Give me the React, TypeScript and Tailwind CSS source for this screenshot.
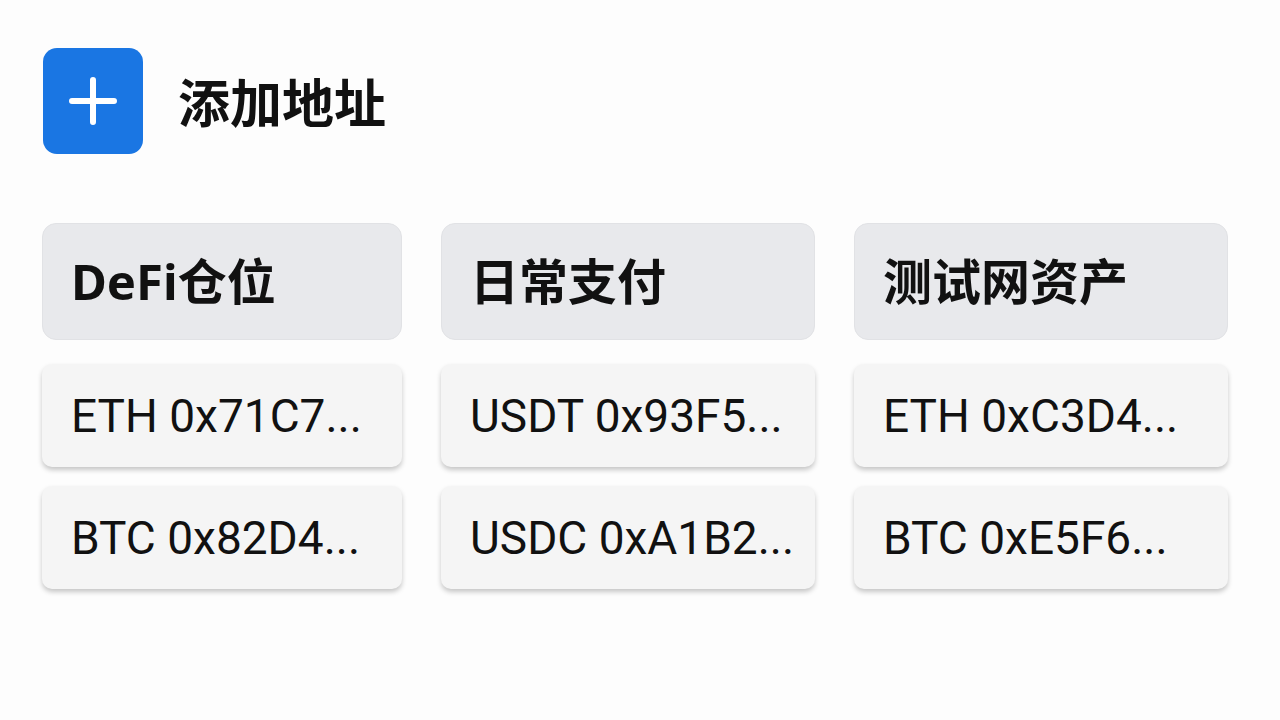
import React from "react";

const cols = [
  { w: "w-[360px]", title: "DeFi仓位", items: ["ETH 0x71C7...", "BTC 0x82D4..."] },
  { w: "w-[374px]", title: "日常支付", items: ["USDT 0x93F5...", "USDC 0xA1B2..."] },
  { w: "w-[374px]", title: "测试网资产", items: ["ETH 0xC3D4...", "BTC 0xE5F6..."] },
];

export default function App() {
  return (
    <div
      className="w-[1280px] h-[720px] bg-[#fdfdfd] text-[#111111] overflow-hidden"
      style={{ fontFamily: 'Roboto, "Noto Sans CJK SC", sans-serif' }}
    >
      <div className="pl-[43px] pt-[48px] flex items-center gap-[35px]">
        <div className="w-[100px] h-[106px] rounded-[14px] bg-[#1a76e3] flex items-center justify-center">
          <svg width="48" height="48" viewBox="0 0 48 48">
            <path d="M24 3 V45 M3 24 H45" stroke="white" strokeWidth="6" strokeLinecap="round" />
          </svg>
        </div>
        <div
          className="text-[52px] font-bold leading-none"
          style={{ fontFamily: '"Noto Sans CJK SC", sans-serif' }}
        >
          添加地址
        </div>
      </div>
      <div className="pl-[42px] pt-[69px] flex gap-[39px]">
        {cols.map((c) => (
          <div key={c.title} className={`${c.w} flex flex-col`}>
            <div
              className="h-[117px] rounded-[14px] bg-[#e8e9ec] border border-[#e1e2e5] flex items-center pl-[28px] text-[49px] font-bold leading-none"
              style={{ fontFamily: '"Noto Sans", "Noto Sans CJK SC", sans-serif' }}
            >
              {c.title}
            </div>
            <div className="mt-[24px] flex flex-col gap-[19px]">
              {c.items.map((it) => (
                <div
                  key={it}
                  className="h-[103px] rounded-[10px] bg-[#f5f5f5] shadow-[0_3px_5px_rgba(0,0,0,0.22)] flex items-center pl-[29px] text-[46px] leading-none"
                >
                  {it}
                </div>
              ))}
            </div>
          </div>
        ))}
      </div>
    </div>
  );
}
